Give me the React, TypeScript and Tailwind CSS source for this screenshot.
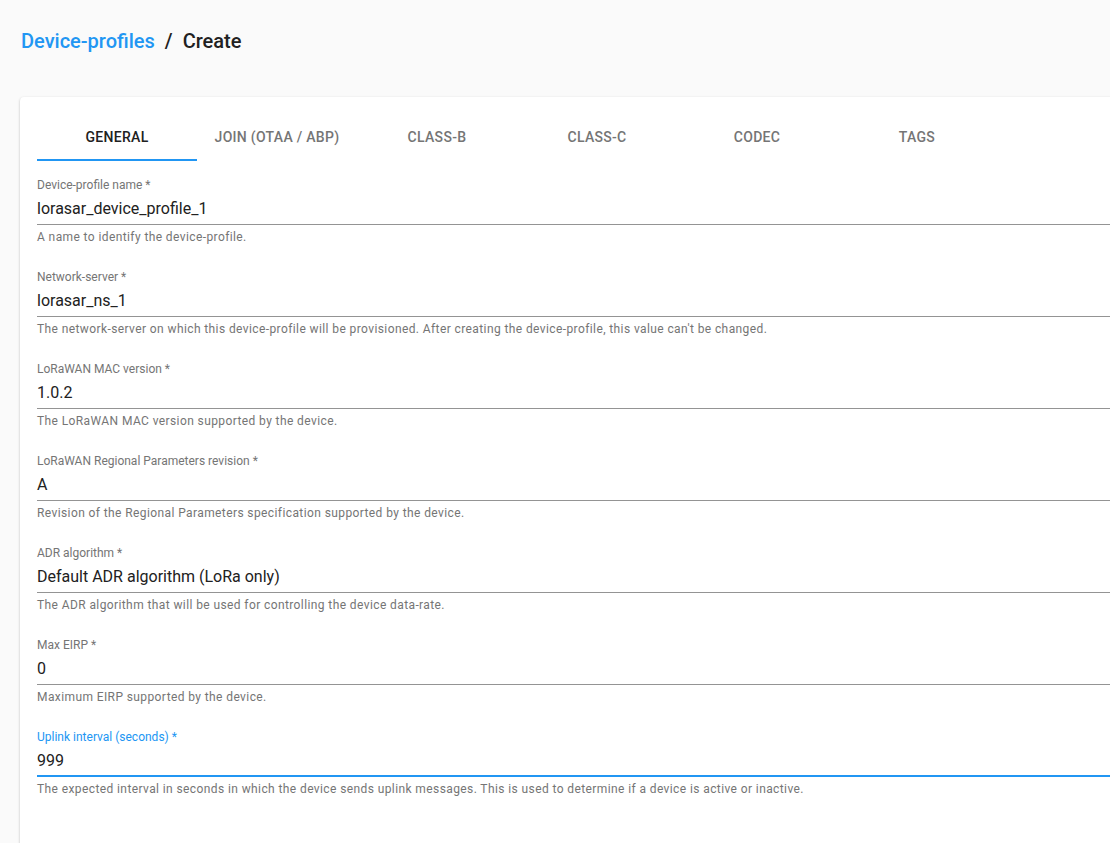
import React from 'react';

interface FieldProps {
  label: string;
  value: string;
  helper: string;
  focused?: boolean;
}

const tabs = ['General', 'Join (OTAA / ABP)', 'Class-B', 'Class-C', 'Codec', 'Tags'];

const fields: FieldProps[] = [
  {
    label: 'Device-profile name *',
    value: 'lorasar_device_profile_1',
    helper: 'A name to identify the device-profile.',
  },
  {
    label: 'Network-server *',
    value: 'lorasar_ns_1',
    helper:
      "The network-server on which this device-profile will be provisioned. After creating the device-profile, this value can't be changed.",
  },
  {
    label: 'LoRaWAN MAC version *',
    value: '1.0.2',
    helper: 'The LoRaWAN MAC version supported by the device.',
  },
  {
    label: 'LoRaWAN Regional Parameters revision *',
    value: 'A',
    helper: 'Revision of the Regional Parameters specification supported by the device.',
  },
  {
    label: 'ADR algorithm *',
    value: 'Default ADR algorithm (LoRa only)',
    helper: 'The ADR algorithm that will be used for controlling the device data-rate.',
  },
  {
    label: 'Max EIRP *',
    value: '0',
    helper: 'Maximum EIRP supported by the device.',
  },
  {
    label: 'Uplink interval (seconds) *',
    value: '999',
    helper:
      'The expected interval in seconds in which the device sends uplink messages. This is used to determine if a device is active or inactive.',
    focused: true,
  },
];

const Field: React.FC<FieldProps> = ({ label, value, helper, focused }) => {
  return (
    <div className="pt-[16px] pb-[9px]">
      <div
        className={
          'text-[12px] leading-[16px] ' + (focused ? 'text-[#2196f3]' : 'text-[#757575]')
        }
      >
        {label}
      </div>
      <div
        className={
          'pt-[6px] text-[16px] leading-[19px] text-[#212121] ' +
          (focused ? 'pb-[5px] border-b-2 border-[#2196f3]' : 'pb-[6px] border-b border-[#949494]')
        }
      >
        {value}
      </div>
      <div className="mt-[5px] text-[12px] leading-[14px] tracking-[0.4px] text-[#757575]">
        {helper}
      </div>
    </div>
  );
};

export default function App() {
  return (
    <div
      className="h-[843px] w-[1110px] overflow-hidden bg-[#fafafa] pl-[20px] pt-[26px]"
      style={{ fontFamily: 'Roboto, "Liberation Sans", sans-serif' }}
    >
      <h1 className="pl-[1px] text-[20px] leading-[30px] font-medium text-[#212121]">
        <span className="text-[#2196f3]">Device-profiles</span>
        <span className="mx-[10px]">/</span>
        <span>Create</span>
      </h1>
      <div className="mt-[41px] w-[1200px] h-[800px] rounded-[4px] bg-white px-[17px] pt-[16px] shadow-[0_1px_3px_rgba(0,0,0,0.2),0_1px_1px_rgba(0,0,0,0.14),0_2px_1px_-1px_rgba(0,0,0,0.12)]">
        <div className="flex">
          {tabs.map((tab, i) => (
            <div
              key={tab}
              className={
                'relative flex h-[48px] w-[160px] items-center justify-center text-[14px] font-medium uppercase tracking-[0.3px] ' +
                (i === 0 ? 'text-[#212121]' : 'text-[#757575]')
              }
            >
              {tab}
              {i === 0 && <span className="absolute bottom-0 left-0 h-[2px] w-full bg-[#2196f3]" />}
            </div>
          ))}
        </div>
        <div className="w-[1073px]">
          {fields.map((f) => (
            <Field key={f.label} {...f} />
          ))}
        </div>
      </div>
    </div>
  );
}
